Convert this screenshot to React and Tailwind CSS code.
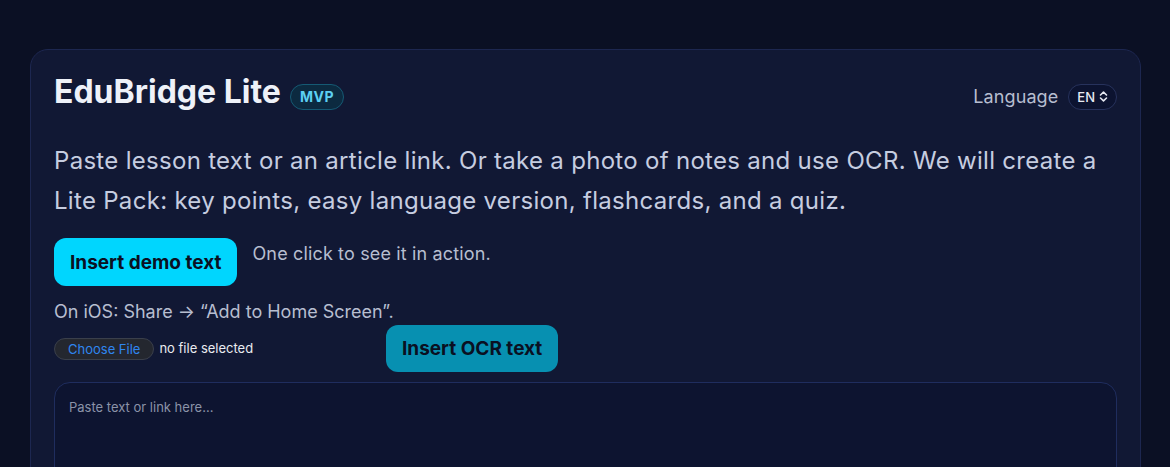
import React from "react";

export default function App() {
  return (
    <div
      className="h-[467px] w-full overflow-hidden bg-[#0b1024] pt-[49px] pl-[30px] pr-[29px]"
      style={{ fontFamily: "Inter, 'Noto Sans', sans-serif" }}
    >
      <div className="rounded-[18px] border border-[#1d2750] bg-[#111834] px-[23px] pt-6 pb-10 h-[440px]">
        <div className="flex items-center justify-between">
          <div className="flex items-center gap-[9px]">
            <h1 className="text-[32px] font-bold leading-9 text-[#eef1f8]">
              EduBridge Lite
            </h1>
            <span className="mt-[9px] rounded-full border border-[#155a74] bg-[#0c2a40] px-[9px] py-[2px] text-[14px] font-bold leading-5 tracking-[0.6px] text-[#5ccff2]">
              MVP
            </span>
          </div>
          <div className="mt-[9px] flex items-center gap-[10px]">
            <span className="text-[18px] tracking-[0.1px] text-[#b7bed0]">Language</span>
            <span className="flex items-center gap-[4px] rounded-full border border-[#27325c] bg-[#0c1330] px-[8px] py-[2px] text-[13px] font-medium leading-5 text-[#e6e9f2]">
              EN
              <svg width="9" height="11" viewBox="0 0 9 11" fill="none" stroke="#e6e9f2" strokeWidth="1.6" strokeLinecap="round" strokeLinejoin="round">
                <path d="M1.5 4 L4.5 1.2 L7.5 4" />
                <path d="M1.5 7 L4.5 9.8 L7.5 7" />
              </svg>
            </span>
          </div>
        </div>

        <p className="mt-[31px] text-[24px] leading-10 tracking-[0.3px] text-[#c6cde0] pr-2">
          Paste lesson text or an article link. Or take a photo of notes and use OCR. We will create a Lite Pack: key points, easy language version, flashcards, and a quiz.
        </p>

        <div className="mt-[17px] flex items-start gap-[15px]">
          <button className="h-12 rounded-xl bg-[#00d6fe] px-4 pt-[2px] text-[19px] font-bold text-[#0a1022]">
            Insert demo text
          </button>
          <span className="mt-[2px] text-[18px] leading-[27px] tracking-[0.15px] text-[#b7bed0]">
            One click to see it in action.
          </span>
        </div>

        <p className="mt-3 text-[18px] leading-[27px] text-[#b7bed0]">
          On iOS: Share → “Add to Home Screen”.
        </p>

        <div className="flex items-center">
          <div className="flex w-[332px] items-center gap-[5px]">
            <span className="rounded-full border border-[#3a3f4b] bg-[#24272f] px-[13px] py-[2px] text-[13px] leading-[16px] text-[#2f86f0]">
              Choose File
            </span>
            <span className="text-[13px] text-[#e9ebf0]">no file selected</span>
          </div>
          <button className="h-[47px] rounded-xl bg-[#0790b1] px-4 pt-[2px] text-[19px] font-bold text-[#0a1022]">
            Insert OCR text
          </button>
        </div>

        <div className="mt-[10px] h-[120px] rounded-2xl border border-[#1f2d5e] bg-[#0d1430] px-[14px] pt-[11px]">
          <span className="text-[13px] text-[#8b93a8]">Paste text or link here...</span>
        </div>
      </div>
    </div>
  );
}
